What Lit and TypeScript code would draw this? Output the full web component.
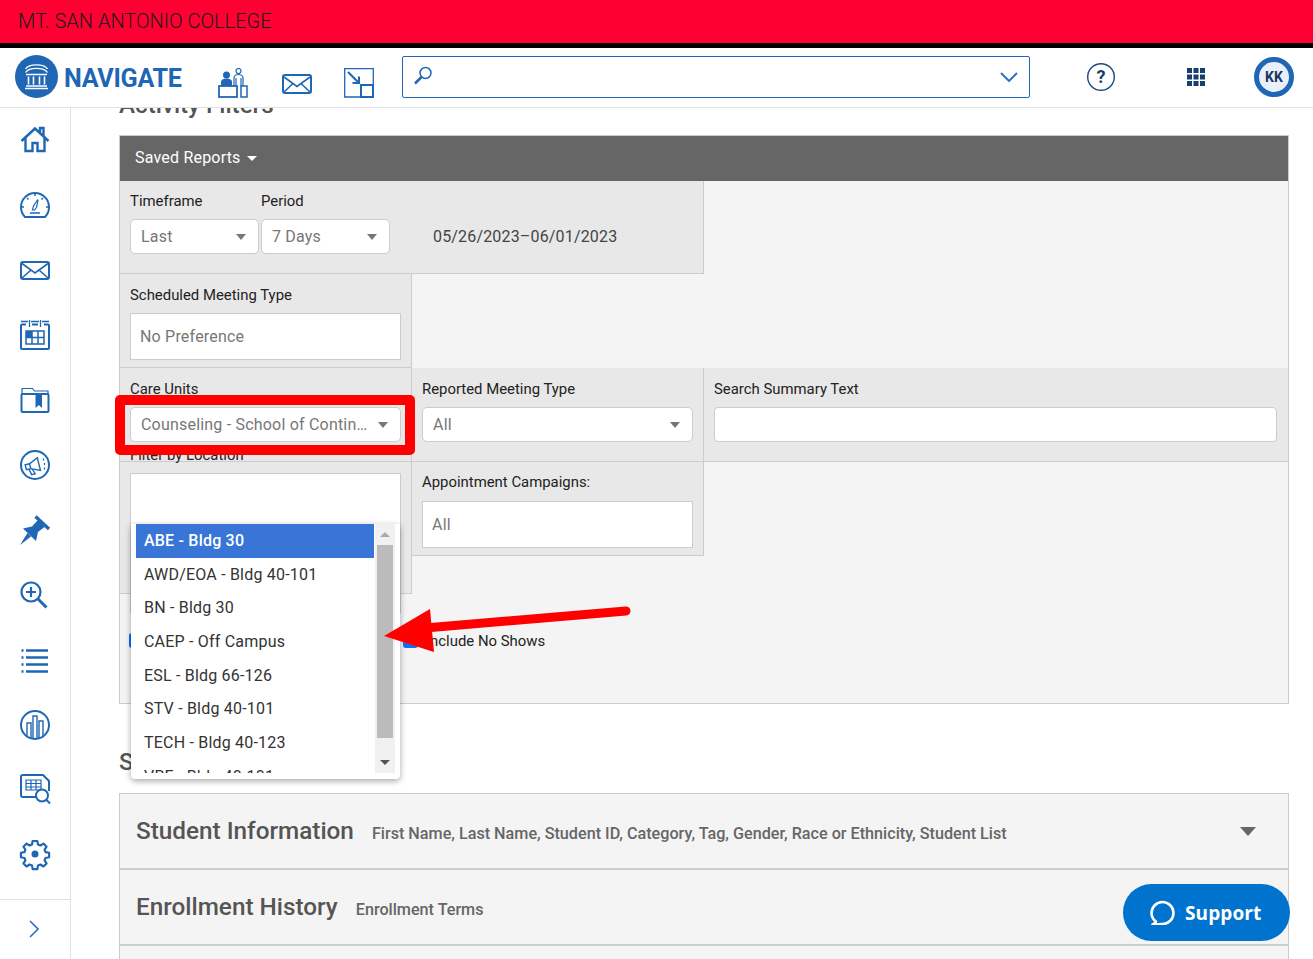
import { LitElement, html, css, svg } from 'lit';
import { customElement } from 'lit/decorators.js';

// dy nudges each glyph inside its 30px slot
const navIcons = [
  // home
  { dy: 1, icon: svg`<path stroke-width="2.400" d="M1.500 15 15 2.500 28.500 15M5.500 12v13h7v-8h5v8h7V12M20 6V2h3.500v7.500" />` },
  // gauge
  { dy: 0, icon: svg`<path d="M5 27C2 24 1 20.500 1 17a14 14 0 0 1 28 0c0 3.500-1 7-4 10Z" /><path d="M15 3v3M4 17H1.500M29 17h-3M7 8l1.500 1.500M23 8l-1.500 1.500M10 23h10" stroke-width="1.500" /><path d="M12.500 20l1-4 4-6 .5 .5-1.500 7-2 2.500Z" stroke-width="1.200" />` },
  // mail
  { dy: 1, icon: svg`<rect x="1" y="6" width="28" height="17" rx="2" /><path d="M2 7.500 15 17 28 7.500M2 22l9-8M28 22l-9-8" stroke-width="1.600" />` },
  // calendar
  { dy: 0, icon: svg`<path d="M1 1.500h7M11 1.500h8M22 1.500h7M9.500 0v7M20.500 0v7" stroke-width="1.300" /><path d="M6 4.500H2a1 1 0 0 0-1 1V28a1 1 0 0 0 1 1h26a1 1 0 0 0 1-1V5.500a1 1 0 0 0-1-1h-4M12 4.500h6" /><rect x="6" y="11" width="18" height="13" stroke-width="1.500" /><path d="M12 11v13M18 11v13M6 17.500h18" stroke-width="1.500" /><rect x="6" y="11" width="6" height="6.500" fill="#1f66b5" stroke="none" />` },
  // folder
  { dy: 1, icon: svg`<path d="M2 8V2.500h10.500L14.500 5h13.500v3" stroke-width="1.200" /><path d="M2.500 8H27.500a1 1 0 0 1 1 1v16a1 1 0 0 1-1 1H2.500a1 1 0 0 1-1-1V9a1 1 0 0 1 1-1Z" /><path d="M15.500 7h6.500v15l-3.200-3-3.300 3Z" fill="#1f66b5" stroke="none" />` },
  // megaphone
  { dy: 0, icon: svg`<circle cx="15" cy="15" r="14" /><g transform="rotate(-14 15 15)" stroke-width="1.400"><path d="M5.500 12.500v5h4.500l9 4V8.500l-9 4Z" /><path d="M8 17.500l1.500 6h3.500l-1.500-5.200" /><path d="M10 12.500v5" /></g><path d="M23.500 8.500v2M24.500 13v2M24.500 17.500v2" stroke-width="1.300" />` },
  // pin
  { dy: 0, icon: svg`<path d="M15.500 1.500 29 14" stroke-width="3.200" /><path d="M18 5 12 11.500 3 13.500 16 26 18 17 24.500 12Z" fill="#1f66b5" stroke="none" /><path d="M7.500 18 11 21.500 0 30Z" fill="#1f66b5" stroke="none" />` },
  // zoom in
  { dy: 1, icon: svg`<circle cx="11" cy="11" r="9.500" stroke-width="2.200" /><path d="M17.800 17.800 26.500 26.500" stroke-width="3" /><path d="M6 11h10M11 6v10" stroke-width="2.200" />` },
  // list
  { dy: 1, icon: svg`<path d="M6 4.500h22M6 11.500h22M6 18.500h22M6 25.500h22" stroke-width="2.400" /><path d="M1.500 4.500h2M1.500 11.500h2M1.500 18.500h2M1.500 25.500h2" stroke-width="2.400" />` },
  // chart
  { dy: 0, icon: svg`<circle cx="15" cy="15" r="14" /><path d="M7 27V13h4v15M13 28V6h4v22M19 28V11h4v16" stroke-width="1.400" />` },
  // report
  { dy: -1, icon: svg`<path d="M17 23H3a2 2 0 0 1-2-2V3a2 2 0 0 1 2-2h20l6 6v10" /><path d="M6 6h15v10H6ZM6 9.500h15M6 13h15M11 6v10M16 6v10" stroke-width="1.200" /><circle cx="22" cy="21.500" r="6" /><path d="M26.500 26 30 29.500" />` },
  // gear
  { dy: -1, icon: svg`<path stroke-width="2.300" d="M12.500 1.500h5l.7 3.700 2.600 1.100 3.200-2.100 3.300 3.400-2.100 3.100 1 2.600 3.800.7v4.800l-3.800.8-1 2.500 2.100 3.200-3.300 3.300-3.200-2.100-2.600 1.100-.7 3.800h-5l-.7-3.800-2.600-1.100-3.200 2.100-3.300-3.300 2.100-3.200-1-2.500-3.800-.8v-4.800l3.800-.7 1-2.600-2.100-3.100 3.300-3.400 3.200 2.100 2.600-1.100Z" transform="matrix(.94 0 0 .94 .9 .6)" stroke-linejoin="round" /><circle cx="15" cy="15" r="3.500" fill="#1f66b5" stroke="none" />` },
];

const locations = [
  'ABE - Bldg 30',
  'AWD/EOA - Bldg 40-101',
  'BN - Bldg 30',
  'CAEP - Off Campus',
  'ESL - Bldg 66-126',
  'STV - Bldg 40-101',
  'TECH - Bldg 40-123',
  'VRE - Bldg 40-101',
];

@customElement('app-root')
export class AppRoot extends LitElement {
  static styles = css`
    :host {
      display: block;
      position: relative;
      height: 959px;
      overflow: hidden;
      background: #fff;
      font-family: Roboto, 'Liberation Sans', sans-serif;
      color: #333;
    }

    .college {
      height: 43px;
      background: #ff0033;
      border-bottom: 5px solid #000;
      padding-left: 18px;
      font-size: 20px;
      font-weight: 300;
      line-height: 42px;
      color: #1a1a1a;
    }

    .topbar {
      position: relative;
      z-index: 2;
      box-sizing: border-box;
      height: 60px;
      padding-bottom: 2px;
      background: #fff;
      border-bottom: 1px solid #e2e2e2;
      display: flex;
      align-items: center;
    }
    .logo {
      margin-left: 15px;
      width: 43px;
      height: 43px;
      flex: none;
    }
    .brand {
      margin: 3px 0 0 6px;
      width: 118px;
      font-size: 25.200px;
      font-weight: 700;
      color: #1f66b5;
      white-space: nowrap;
      letter-spacing: -0.3px;
    }
    .top-icon {
      flex: none;
      fill: none;
      stroke: #1f66b5;
      stroke-width: 2;
    }
    .search {
      flex: none;
      box-sizing: border-box;
      width: 628px;
      height: 42px;
      margin-left: 28px;
      border: 1px solid #1f66b5;
      border-radius: 2px;
      display: flex;
      align-items: center;
      justify-content: space-between;
      padding: 0 11px 1px 10px;
    }
    .avatar {
      box-sizing: border-box;
      flex: none;
      width: 40px;
      height: 40px;
      margin-left: 49px;
      border-radius: 50%;
      border: 5px solid #1f66b5;
      background: #e9f0fb;
      color: #17375e;
      font-size: 14px;
      font-weight: 700;
      display: flex;
      align-items: center;
      justify-content: center;
    }

    .body {
      display: flex;
      height: 851px;
    }
    .sidebar {
      flex: none;
      box-sizing: border-box;
      width: 71px;
      margin-top: -1px;
      border-right: 1px solid #e2e2e2;
      display: flex;
      flex-direction: column;
    }
    .nav-item {
      height: 65px;
      flex: none;
      display: flex;
      align-items: center;
      justify-content: center;
    }
    .nav-item svg {
      fill: none;
      stroke: #1f66b5;
      stroke-width: 2;
      overflow: visible;
    }
    .side-foot {
      margin-top: auto;
      box-sizing: border-box;
      height: 60px;
      padding: 0 2px 2px 0;
      border-top: 1px solid #e2e2e2;
      display: flex;
      align-items: center;
      justify-content: center;
    }

    .main {
      flex: 1;
      min-width: 0;
      padding: 0 24px 0 48px;
      overflow: hidden;
    }
    .page-title {
      margin: -18px 0 14px;
      font-size: 24.200px;
      line-height: 31px;
      font-weight: 500;
      color: #555;
    }

    .panel {
      border: 1px solid #ccc;
      background: #f4f4f4;
      height: 567px;
    }
    .saved {
      height: 45px;
      background: #666;
      color: #fff;
      font-size: 16px;
      letter-spacing: 0.2px;
      line-height: 44px;
      padding-left: 15px;
    }
    .saved i {
      display: inline-block;
      margin-left: 6px;
      vertical-align: middle;
      border: 5px solid transparent;
      border-top-color: #fff;
      border-bottom: 0;
    }
    .row {
      display: flex;
      align-items: flex-start;
    }
    .cell {
      box-sizing: border-box;
      flex: none;
      width: 292px;
      height: 94px;
      padding: 12px 10px 0;
      background: #e8e8e8;
      border-right: 1px solid #ccc;
      border-bottom: 1px solid #ccc;
    }
    .cell.wide {
      width: 584px;
    }
    .cell.short {
      height: 93px;
      padding-top: 11px;
    }
    .cell.last {
      border-right: 0;
    }
    .cell.tall {
      height: 132px;
    }
    label {
      display: block;
      font-size: 14.900px;
      line-height: 18px;
      color: #222;
    }
    .time-fields {
      display: grid;
      grid-template-columns: 131px 131px 1fr;
      row-gap: 9px;
    }
    .time-fields .date {
      font-size: 16px;
      line-height: 35px;
      color: #444;
      padding-left: 41px;
      letter-spacing: 0.17px;
      white-space: nowrap;
    }
    .select {
      box-sizing: border-box;
      height: 35px;
      background: #fff;
      border: 1px solid #ccc;
      border-radius: 5px;
      padding: 0 12px 0 10px;
      display: flex;
      align-items: center;
      justify-content: space-between;
      font-size: 16px;
      color: #777;
      letter-spacing: 0.2px;
      white-space: nowrap;
    }
    .time-fields .select {
      width: 129px;
    }
    .select span {
      overflow: hidden;
      text-overflow: ellipsis;
    }
    .select i {
      flex: none;
      margin-left: 10px;
      border: 5.500px solid transparent;
      border-top: 6px solid #777;
      border-bottom: 0;
    }
    .stack .select,
    .stack .box {
      margin-top: 9px;
    }
    .box {
      box-sizing: border-box;
      height: 47px;
      background: #fff;
      border: 1px solid #ccc;
      padding-left: 9px;
      font-size: 16px;
      line-height: 45px;
      color: #777;
      letter-spacing: 0.2px;
    }
    .text-input {
      box-sizing: border-box;
      height: 35px;
      margin: 9px 1px 0 0;
      background: #fff;
      border: 1px solid #ccc;
      border-radius: 4px;
    }
    /* the location label sits above its own cell in the original */
    .location {
      margin-top: -28px;
    }
    .campaigns {
      margin-top: -1px;
    }
    .stack .campaigns + .box {
      margin-top: 10px;
    }
    .filter-box {
      height: 140px;
    }

    .checks {
      display: flex;
      align-items: center;
      margin-top: 37px;
      padding-left: 9px;
    }
    .checks .tick {
      width: 15px;
      height: 15px;
      border-radius: 3px;
      background: #0d6efd;
      flex: none;
    }
    .checks .tick + .tick {
      margin-left: 259px;
    }
    .checks span {
      margin: 1px 0 0 8px;
      font-size: 14.900px;
      color: #222;
    }

    .section-title {
      margin: 44px 0 16px;
      font-size: 24px;
      line-height: 29px;
      font-weight: 500;
      color: #555;
    }
    .accordion {
      box-sizing: border-box;
      height: 76px;
      background: #f4f4f4;
      border: 1px solid #ccc;
      border-bottom-width: 2px;
      border-top: 0;
      padding: 0 32px 0 16px;
      display: flex;
      align-items: center;
      color: #555;
      font-weight: 500;
    }
    .accordion.first {
      height: 77px;
      border-top: 1px solid #ccc;
    }
    .accordion h2 {
      margin: -1px 0 0;
      font-size: 24.300px;
      font-weight: 500;
      white-space: nowrap;
    }
    .accordion p {
      margin: 4px 0 0 18px;
      font-size: 16.180px;
      color: #666;
      white-space: nowrap;
    }
    .accordion i {
      margin-left: auto;
      margin-top: 0;
      border: 8px solid transparent;
      border-top: 9px solid #666;
      border-bottom: 0;
    }

    .highlight {
      position: absolute;
      z-index: 4;
      left: 115px;
      top: 395px;
      box-sizing: border-box;
      width: 300px;
      height: 60px;
      border: 10px solid #ff0000;
      border-radius: 5px;
    }
    .dropdown {
      position: absolute;
      z-index: 3;
      left: 131px;
      top: 524px;
      width: 269px;
      height: 255px;
      background: #fff;
      border-radius: 0 0 4px 4px;
      box-shadow: 0 2px 6px rgba(0, 0, 0, 0.35);
      display: flex;
      align-items: flex-start;
    }
    .options {
      flex: none;
      width: 238px;
      height: 249px;
      overflow: hidden;
      padding-left: 5px;
      box-sizing: content-box;
    }
    .option {
      height: 33.700px;
      line-height: 33.700px;
      padding-left: 8px;
      font-size: 16px;
      color: #333;
      letter-spacing: 0.2px;
      white-space: nowrap;
    }
    .option.on {
      background: #3875d7;
      color: #fff;
      font-weight: 500;
    }
    .scroll {
      box-sizing: border-box;
      flex: none;
      width: 20px;
      height: 249px;
      margin-left: 1px;
      background: #f1f1f1;
      padding: 21px 2px 0;
      position: relative;
    }
    .thumb {
      height: 193px;
      background: #bbb;
    }
    .scroll b {
      position: absolute;
      left: 5px;
      border: 5px solid transparent;
    }
    .scroll .up {
      top: 8px;
      border-bottom: 5px solid #aaa;
      border-top: 0;
    }
    .scroll .down {
      bottom: 8px;
      border-top: 5px solid #555;
      border-bottom: 0;
    }
    .arrow {
      position: absolute;
      z-index: 5;
      left: 380px;
      top: 600px;
    }
    .support {
      position: absolute;
      z-index: 6;
      left: 1123px;
      top: 884px;
      box-sizing: border-box;
      width: 167px;
      height: 57px;
      border-radius: 29px;
      background: #0073cf;
      color: #fff;
      display: flex;
      align-items: center;
      padding-left: 27px;
      font-family: 'Open Sans', sans-serif;
      font-size: 19px;
      font-weight: 700;
      letter-spacing: 0.1px;
    }
    .support svg {
      margin-right: 10px;
    }
  `;

  private _select(text: string) {
    return html`<div class="select"><span>${text}</span><i></i></div>`;
  }

  render() {
    return html`
      <div class="college">MT. SAN ANTONIO COLLEGE</div>
      <header class="topbar">
        <svg class="logo" viewBox="0 0 43 43">
          <circle cx="21.500" cy="21.500" r="21.500" fill="#1f66b5" />
          <g fill="none" stroke="#fff">
            <path d="M10.500 17.500C14 12 29 12 32.500 17.500M10.500 14C14 8.500 29 8.500 32.500 14" stroke-width="1.300" />
            <path d="M11 19.500h21M13.500 21.500v8M18.500 21.500v8M24.500 21.500v8M29.500 21.500v8M11 31h21M10 33.500h23" stroke-width="1.600" />
          </g>
        </svg>
        <div class="brand">NAVIGATE</div>
        <svg class="top-icon" style="margin:12px 0 0 36px" width="30" height="30" viewBox="0 0 30 30">
          <circle cx="8.500" cy="7" r="3.500" fill="#1f66b5" stroke="none" />
          <path d="M3 18v-4c0-2 2-3.500 5.500-3.500S14 12 14 14v4Z" fill="#1f66b5" stroke="none" />
          <circle cx="20.500" cy="3" r="2.500" stroke-width="1.200" />
          <path d="M16 18v-8c0-2 2-3.500 4.500-3.500S25 8 25 10v8M18 10v8M23 10v8" stroke-width="1.200" />
          <rect x="1" y="18" width="18" height="11" stroke-width="1.800" />
          <rect x="23" y="18" width="6" height="11" stroke-width="1.500" />
        </svg>
        <svg class="top-icon" style="margin:14px 0 0 34px" width="30" height="20" viewBox="0 0 30 20">
          <rect x="1" y="1" width="28" height="18" rx="2" />
          <path d="M2 3 15 12.500 28 3M2 18l9-8.500M28 18l-9-8.500" stroke-width="1.600" />
        </svg>
        <svg class="top-icon" style="margin:13px 0 0 32px" width="30" height="30" viewBox="0 0 30 30">
          <path d="M17 29H.7V.7H29.300V17" stroke-width="1.300" />
          <rect x="17" y="17" width="12" height="12" stroke-width="2" />
          <path d="M4 4 15 15M15 8.500V15H8.500" stroke-width="2" />
        </svg>
        <div class="search">
          <svg class="top-icon" width="20" height="20" viewBox="0 0 20 20">
            <circle cx="12.500" cy="7" r="5.500" stroke-width="1.500" />
            <path d="M8.500 11 2 17.500" stroke-width="2.500" />
          </svg>
          <svg class="top-icon" style="margin-top:1px" width="18" height="10" viewBox="0 0 18 10">
            <path d="M1 1 9 9 17 1" stroke="#2a73c5" />
          </svg>
        </div>
        <svg style="margin-left:57px;flex:none" width="28" height="28" viewBox="0 0 28 28">
          <circle cx="14" cy="14" r="13.300" fill="none" stroke="#1b4a7c" stroke-width="1.400" />
          <text x="14" y="20" text-anchor="middle" font-size="18" font-weight="700" fill="#143f6e" font-family="Roboto, sans-serif">?</text>
        </svg>
        <svg style="margin-left:72px;flex:none" width="18" height="18" viewBox="0 0 18 18" fill="#143f6e">
          ${[0, 6.500, 13].map(y =>
            [0, 6.500, 13].map(x => svg`<rect x=${x} y=${y} width="5" height="5" />`),
          )}
        </svg>
        <div class="avatar">KK</div>
      </header>

      <div class="body">
        <nav class="sidebar">
          ${navIcons.map(
            item => html`<div class="nav-item">
              <svg width="30" height="30" viewBox="0 ${-item.dy} 30 30">${item.icon}</svg>
            </div>`,
          )}
          <div class="side-foot">
            <svg width="10" height="18" viewBox="0 0 10 18" fill="none" stroke="#2a73c5" stroke-width="1.600">
              <path d="M1 1 9 9 1 17" />
            </svg>
          </div>
        </nav>

        <main class="main">
          <h1 class="page-title">Activity Filters</h1>
          <section class="panel">
            <div class="saved">Saved Reports<i></i></div>
            <div class="row">
              <div class="cell wide short">
                <div class="time-fields">
                  <label>Timeframe</label>
                  <label>Period</label>
                  <span></span>
                  ${this._select('Last')} ${this._select('7 Days')}
                  <div class="date">05/26/2023–06/01/2023</div>
                </div>
              </div>
            </div>
            <div class="row">
              <div class="cell stack">
                <label>Scheduled Meeting Type</label>
                <div class="box">No Preference</div>
              </div>
            </div>
            <div class="row">
              <div class="cell stack">
                <label>Care Units</label>
                ${this._select('Counseling - School of Continuing Education')}
              </div>
              <div class="cell stack">
                <label>Reported Meeting Type</label>
                ${this._select('All')}
              </div>
              <div class="cell wide last">
                <label>Search Summary Text</label>
                <div class="text-input"></div>
              </div>
            </div>
            <div class="row">
              <div class="cell tall stack">
                <label class="location">Filter by Location</label>
                <div class="box filter-box"></div>
              </div>
              <div class="cell stack">
                <label class="campaigns">Appointment Campaigns:</label>
                <div class="box">All</div>
              </div>
            </div>
            <div class="checks">
              <div class="tick"></div>
              <div class="tick"></div>
              <span>Include No Shows</span>
            </div>
          </section>

          <div class="section-title">Student Filters</div>
          <div class="accordion first">
            <h2>Student Information</h2>
            <p>First Name, Last Name, Student ID, Category, Tag, Gender, Race or Ethnicity, Student List</p>
            <i></i>
          </div>
          <div class="accordion">
            <h2>Enrollment History</h2>
            <p>Enrollment Terms</p>
          </div>
          <div class="accordion"></div>
        </main>
      </div>

      <div class="highlight"></div>

      <div class="dropdown">
        <div class="options">
          ${locations.map(
            (name, i) => html`<div class="option ${i === 0 ? 'on' : ''}">${name}</div>`,
          )}
        </div>
        <div class="scroll">
          <b class="up"></b>
          <div class="thumb"></div>
          <b class="down"></b>
        </div>
      </div>

      <svg class="arrow" width="255" height="56" viewBox="0 0 255 56">
        <path d="M45 28 246 11" stroke="#ff0000" stroke-width="9" stroke-linecap="round" />
        <path d="M4 36 50 9 54 52Z" fill="#ff0000" />
      </svg>

      <div class="support">
        <svg width="25" height="25" viewBox="0 0 25 25" fill="none" stroke="#fff" stroke-width="2.600">
          <path d="M6 21.500C3 19.500 1.500 16.500 1.500 13a11 11 0 1 1 11 11c-3 0-8 .8-10 .5 1.500-.5 3-1.500 3.500-3Z" stroke-linejoin="round" />
        </svg>
        Support
      </div>
    `;
  }
}
